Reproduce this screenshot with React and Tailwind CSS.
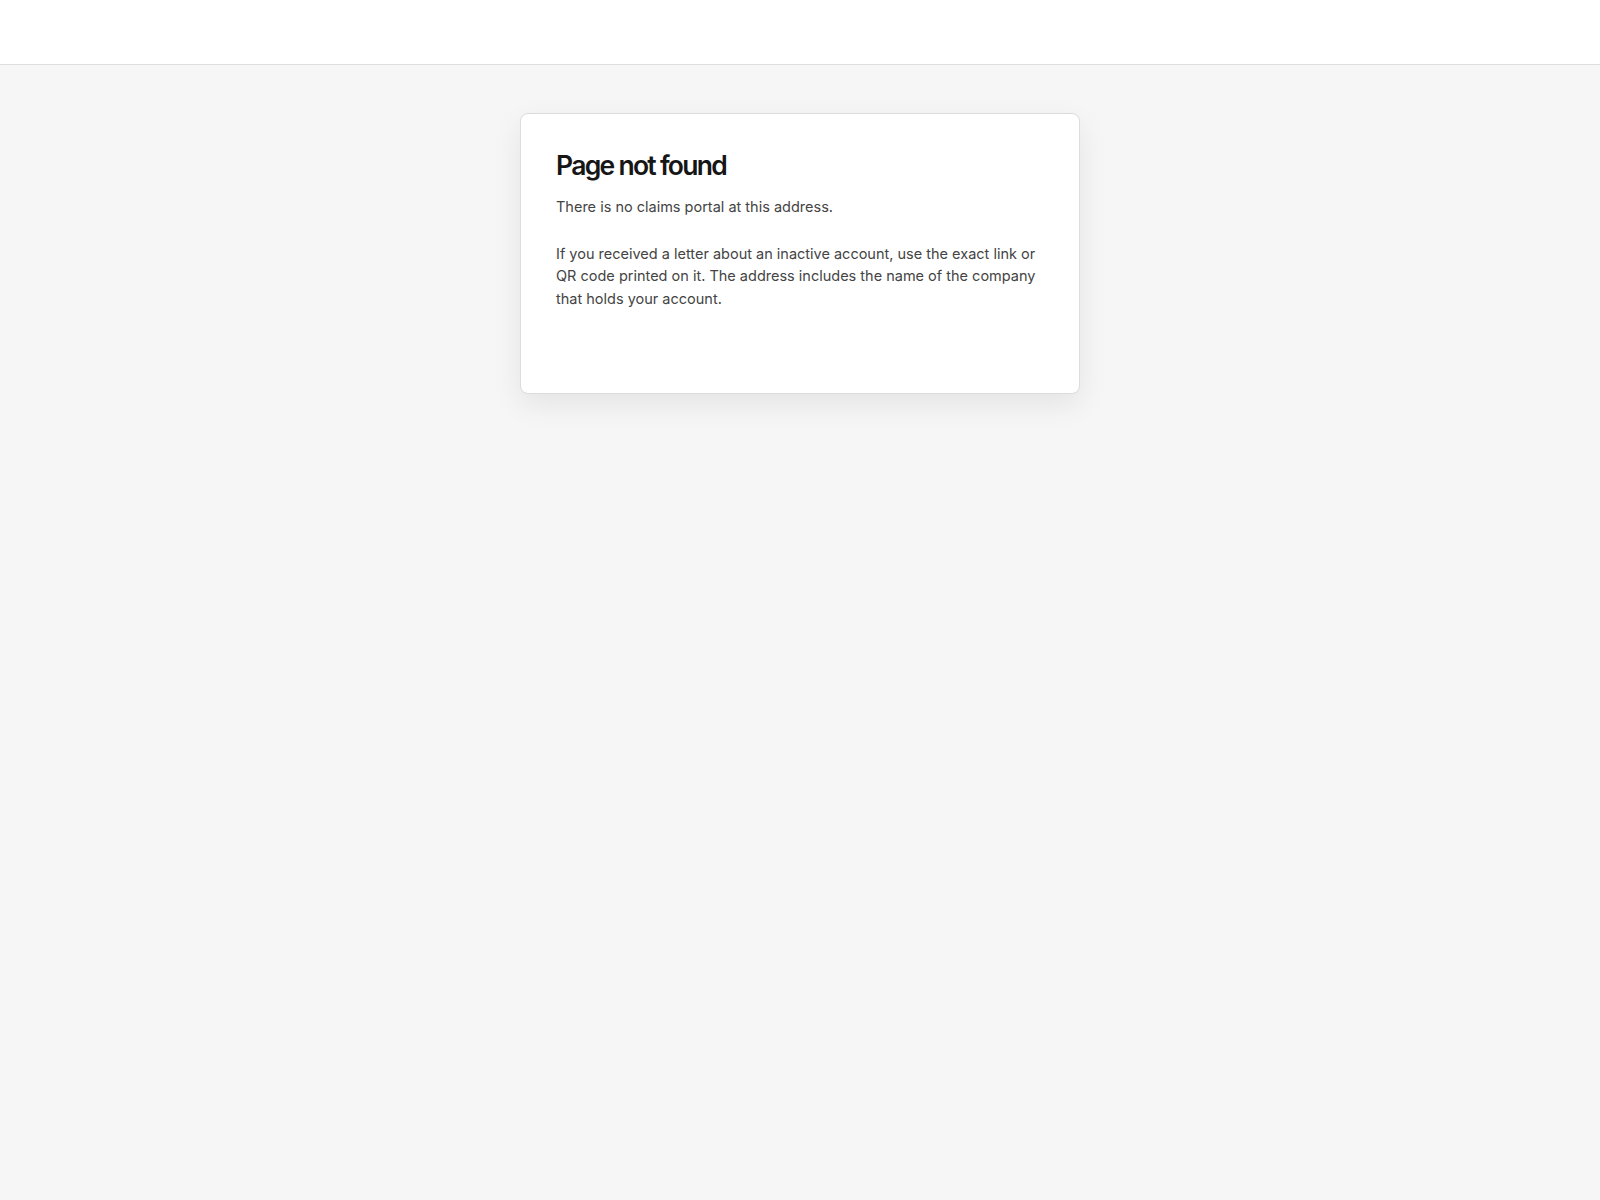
export default function App() {
  return (
    <div className="min-h-screen bg-[#f6f6f6] font-['Inter','Noto_Sans',sans-serif]">
      <header className="h-[65px] bg-white border-b border-[#dedede]" />
      <main className="flex justify-center px-4 pt-12">
        <div className="w-full max-w-[560px] bg-white border border-[#dcdcdc] rounded-lg shadow-[0_10px_30px_rgba(0,0,0,0.08)] px-[35px] pt-[34px] pb-[83px]">
          <h1 className="text-[26.5px] leading-[34px] font-semibold tracking-[-0.065em] text-[#161616]">Page not found</h1>
          <p className="mt-[14px] text-[14.5px] leading-[22.5px] text-[#444]">There is no claims portal at this address.</p>
          <p className="mt-6 text-[14.5px] leading-[22.5px] text-[#444]">
            If you received a letter about an inactive account, use the exact link or QR code printed on it. The address includes the name of the company that holds your account.
          </p>
        </div>
      </main>
    </div>
  );
}
